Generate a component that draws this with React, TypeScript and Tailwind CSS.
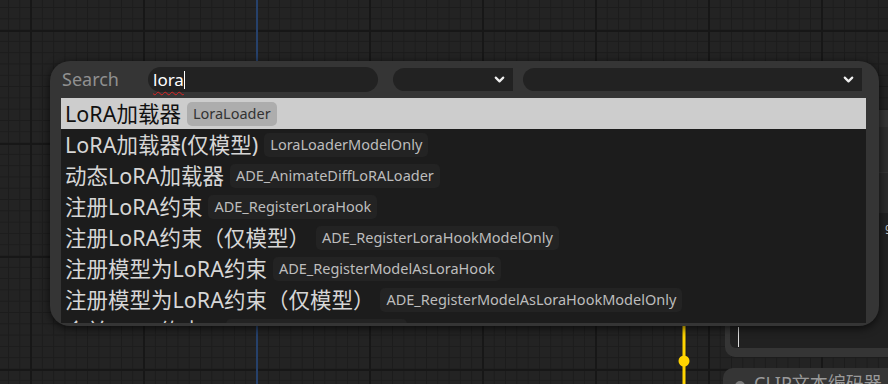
import { ChevronDown } from 'lucide-react'

const rows: [string, string][] = [
  ['LoRA加载器', 'LoraLoader'],
  ['LoRA加载器(仅模型)', 'LoraLoaderModelOnly'],
  ['动态LoRA加载器', 'ADE_AnimateDiffLoRALoader'],
  ['注册LoRA约束', 'ADE_RegisterLoraHook'],
  ['注册LoRA约束（仅模型）', 'ADE_RegisterLoraHookModelOnly'],
  ['注册模型为LoRA约束', 'ADE_RegisterModelAsLoraHook'],
  ['注册模型为LoRA约束（仅模型）', 'ADE_RegisterModelAsLoraHookModelOnly'],
  ['合并LoRA约束 2', 'ADE_CombineLoraHooks'],
]

const font = "font-['Noto_Sans','Noto_Sans_CJK_SC',sans-serif]"

const ResultRow = ({ name, type, active }: { name: string; type: string; active: boolean }) => (
  <div className={`h-[31px] shrink-0 flex items-center gap-[6px] pl-[4px] ${active ? 'bg-[#cdcdcd]' : ''}`}>
    <span className={`text-[21.5px] leading-none whitespace-nowrap ${active ? 'text-[#111]' : 'text-[#d6d6d6]'}`}>{name}</span>
    <span
      className={`h-[24px] px-[6px] flex items-center rounded-[5px] text-[14.5px] whitespace-nowrap ${
        active ? 'bg-[#adadad] text-[#333]' : 'bg-[#232323] text-[#bdbdbd]'
      }`}
    >
      {type}
    </span>
  </div>
)

export default function App() {
  return (
    <div
      className={`relative w-[888px] h-[384px] overflow-hidden bg-[#232323] ${font} [background-image:linear-gradient(to_right,#171717_2px,transparent_2px),linear-gradient(to_bottom,#171717_2px,transparent_2px),linear-gradient(to_right,#1c1c1c_1px,transparent_1px),linear-gradient(to_bottom,#1c1c1c_1px,transparent_1px)] [background-size:113px_113px,113px_113px,11.3px_11.3px,11.3px_11.3px] [background-position:30px_0,0_30px,8px_7px,8px_7px]`}
    >
      {/* link line behind the dialog */}
      <div className="absolute left-[256px] top-0 w-[2px] h-full bg-[#26416b]" />

      {/* canvas nodes on the right */}
      <div className="absolute left-[725px] top-[110px] w-[200px] h-[247px] rounded-[10px] bg-[#353535]">
        <div className="absolute left-[154px] top-[17px] w-[40px] h-[45px] bg-[#2e2e2e]" />
        <div className="absolute left-[154px] top-[63px] w-[40px] h-[40px] bg-[#2b2b2b]" />
        <div className="absolute left-[5px] top-[103px] right-0 h-[135px] bg-[#212121] rounded-bl-[6px]">
          <span className="absolute left-[155px] top-[6px] text-[11px] text-[#ccc]">g</span>
          <div className="absolute left-[8px] top-[114px] w-[1px] h-[20px] bg-[#ddd]" />
        </div>
      </div>
      <div className="absolute left-[723px] top-[368px] w-[200px] h-[40px] rounded-[10px] bg-[#353535] flex items-start gap-[9px] pl-[12px] pt-[6px]">
        <span className="mt-[7px] w-[10px] h-[10px] rounded-full bg-[#7a7a7a]" />
        <span className="text-[18px] leading-none text-[#9a9a9a] whitespace-nowrap">CLIP文本编码器</span>
      </div>
      <svg className="absolute left-[676px] top-[320px]" width="16" height="64" viewBox="0 0 16 64">
        <path d="M8 0 L8 64" stroke="#ffd400" strokeWidth="3" />
        <circle cx="8" cy="41" r="5.5" fill="#ffd400" />
      </svg>

      {/* search dialog */}
      <div className="absolute left-[50px] top-[61px] w-[829px] h-[265px] rounded-[20px] bg-[#353535] shadow-[0_2px_10px_rgba(0,0,0,0.7)] flex flex-col px-[11px] pb-[3px] overflow-hidden">
        <div className="h-[37px] shrink-0 flex items-center">
          <span className="w-[87px] text-[18px] text-[#909090] pl-px">Search</span>
          <div className="w-[230px] h-[25px] rounded-full bg-[#222] flex items-center pl-[5px]">
            <span className="text-[17px] leading-none text-white underline decoration-wavy decoration-[#d22] decoration-1 underline-offset-[5px]">lora</span>
            <span className="w-px h-[18px] bg-white" />
          </div>
          <div className="ml-[15px] w-[120px] h-[23px] rounded-l-full bg-[#222] flex items-center justify-end pr-[6px]">
            <ChevronDown size={15} strokeWidth={3.5} className="text-[#eee]" />
          </div>
          <div className="ml-[10px] w-[339px] h-[23px] rounded-l-full bg-[#222] flex items-center justify-end pr-[6px]">
            <ChevronDown size={15} strokeWidth={3.5} className="text-[#eee]" />
          </div>
        </div>
        <div className="flex-1 bg-[#1c1c1c] flex flex-col overflow-hidden w-[805px]">
          {rows.map(([name, type], i) => (
            <ResultRow key={type} name={name} type={type} active={i === 0} />
          ))}
        </div>
      </div>
    </div>
  )
}
